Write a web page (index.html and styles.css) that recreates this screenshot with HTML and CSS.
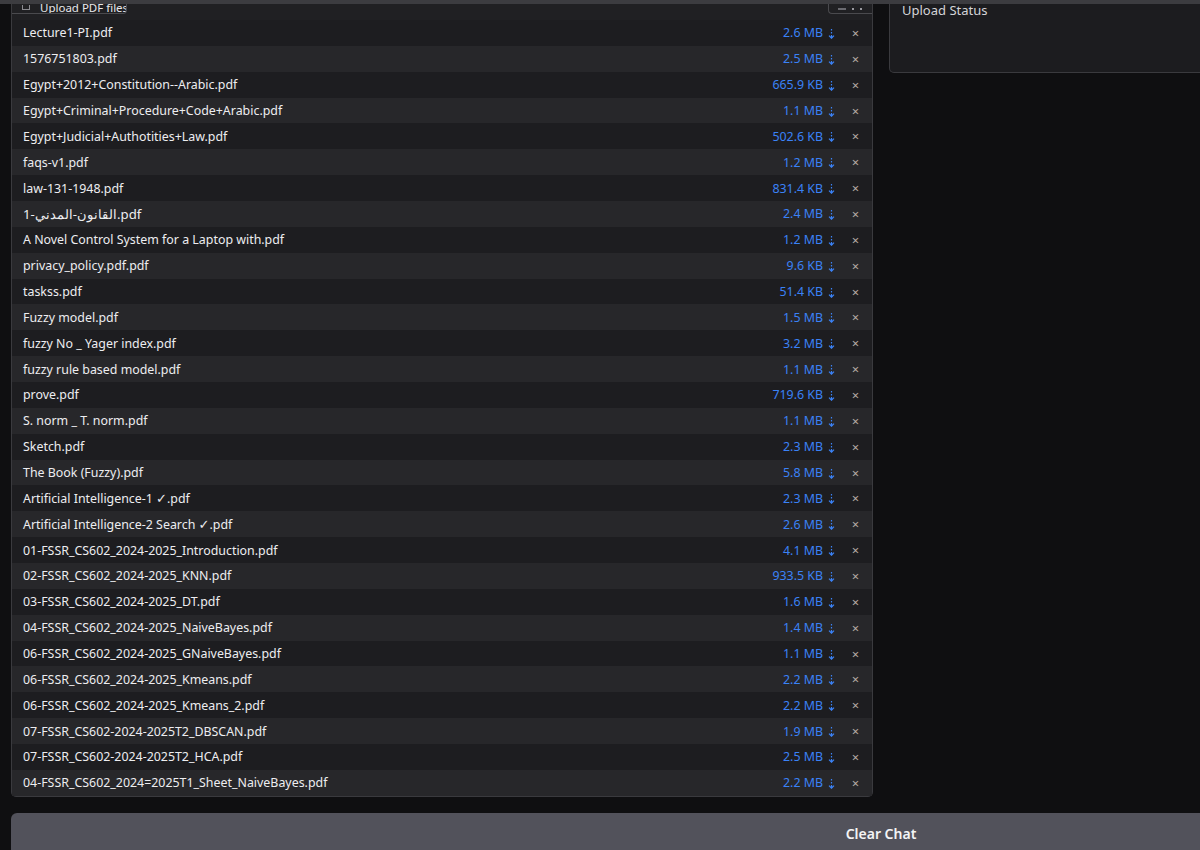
FILE: index.html
```html
<!DOCTYPE html>
<html>
<head>
<meta charset="utf-8">
<link rel="stylesheet" href="styles.css">
</head>
<body>
<div class="topbar"></div>
<div class="main">
  <div class="cols">
    <div class="panel files">
      <div class="files-head">
        <div class="label-tab"><span class="lt-icon"></span><span class="lt-text">Upload PDF files</span></div>
        <div class="icon-tab"><span class="it-a"></span><span class="it-b"></span><span class="it-c"></span></div>
      </div>
      <div class="list">
        <div class="row"><span class="name">Lecture1-PI.pdf</span><span class="size">2.6 MB<svg class="arr" viewBox="0 0 7 10"><path d="M3.5 0v1.6M3.5 3v1.6M3.5 6v3.2M1 6.6l2.5 2.6 2.5-2.6"/></svg></span><span class="rm">×</span></div>
        <div class="row"><span class="name">1576751803.pdf</span><span class="size">2.5 MB<svg class="arr" viewBox="0 0 7 10"><path d="M3.5 0v1.6M3.5 3v1.6M3.5 6v3.2M1 6.6l2.5 2.6 2.5-2.6"/></svg></span><span class="rm">×</span></div>
        <div class="row"><span class="name">Egypt+2012+Constitution--Arabic.pdf</span><span class="size">665.9 KB<svg class="arr" viewBox="0 0 7 10"><path d="M3.5 0v1.6M3.5 3v1.6M3.5 6v3.2M1 6.6l2.5 2.6 2.5-2.6"/></svg></span><span class="rm">×</span></div>
        <div class="row"><span class="name">Egypt+Criminal+Procedure+Code+Arabic.pdf</span><span class="size">1.1 MB<svg class="arr" viewBox="0 0 7 10"><path d="M3.5 0v1.6M3.5 3v1.6M3.5 6v3.2M1 6.6l2.5 2.6 2.5-2.6"/></svg></span><span class="rm">×</span></div>
        <div class="row"><span class="name">Egypt+Judicial+Authotities+Law.pdf</span><span class="size">502.6 KB<svg class="arr" viewBox="0 0 7 10"><path d="M3.5 0v1.6M3.5 3v1.6M3.5 6v3.2M1 6.6l2.5 2.6 2.5-2.6"/></svg></span><span class="rm">×</span></div>
        <div class="row"><span class="name">faqs-v1.pdf</span><span class="size">1.2 MB<svg class="arr" viewBox="0 0 7 10"><path d="M3.5 0v1.6M3.5 3v1.6M3.5 6v3.2M1 6.6l2.5 2.6 2.5-2.6"/></svg></span><span class="rm">×</span></div>
        <div class="row"><span class="name">law-131-1948.pdf</span><span class="size">831.4 KB<svg class="arr" viewBox="0 0 7 10"><path d="M3.5 0v1.6M3.5 3v1.6M3.5 6v3.2M1 6.6l2.5 2.6 2.5-2.6"/></svg></span><span class="rm">×</span></div>
        <div class="row"><span class="name ar">القانون-المدني-1.pdf</span><span class="size">2.4 MB<svg class="arr" viewBox="0 0 7 10"><path d="M3.5 0v1.6M3.5 3v1.6M3.5 6v3.2M1 6.6l2.5 2.6 2.5-2.6"/></svg></span><span class="rm">×</span></div>
        <div class="row"><span class="name">A Novel Control System for a Laptop with.pdf</span><span class="size">1.2 MB<svg class="arr" viewBox="0 0 7 10"><path d="M3.5 0v1.6M3.5 3v1.6M3.5 6v3.2M1 6.6l2.5 2.6 2.5-2.6"/></svg></span><span class="rm">×</span></div>
        <div class="row"><span class="name">privacy_policy.pdf.pdf</span><span class="size">9.6 KB<svg class="arr" viewBox="0 0 7 10"><path d="M3.5 0v1.6M3.5 3v1.6M3.5 6v3.2M1 6.6l2.5 2.6 2.5-2.6"/></svg></span><span class="rm">×</span></div>
        <div class="row"><span class="name">taskss.pdf</span><span class="size">51.4 KB<svg class="arr" viewBox="0 0 7 10"><path d="M3.5 0v1.6M3.5 3v1.6M3.5 6v3.2M1 6.6l2.5 2.6 2.5-2.6"/></svg></span><span class="rm">×</span></div>
        <div class="row"><span class="name">Fuzzy model.pdf</span><span class="size">1.5 MB<svg class="arr" viewBox="0 0 7 10"><path d="M3.5 0v1.6M3.5 3v1.6M3.5 6v3.2M1 6.6l2.5 2.6 2.5-2.6"/></svg></span><span class="rm">×</span></div>
        <div class="row"><span class="name">fuzzy No _ Yager index.pdf</span><span class="size">3.2 MB<svg class="arr" viewBox="0 0 7 10"><path d="M3.5 0v1.6M3.5 3v1.6M3.5 6v3.2M1 6.6l2.5 2.6 2.5-2.6"/></svg></span><span class="rm">×</span></div>
        <div class="row"><span class="name">fuzzy rule based model.pdf</span><span class="size">1.1 MB<svg class="arr" viewBox="0 0 7 10"><path d="M3.5 0v1.6M3.5 3v1.6M3.5 6v3.2M1 6.6l2.5 2.6 2.5-2.6"/></svg></span><span class="rm">×</span></div>
        <div class="row"><span class="name">prove.pdf</span><span class="size">719.6 KB<svg class="arr" viewBox="0 0 7 10"><path d="M3.5 0v1.6M3.5 3v1.6M3.5 6v3.2M1 6.6l2.5 2.6 2.5-2.6"/></svg></span><span class="rm">×</span></div>
        <div class="row"><span class="name">S. norm _ T. norm.pdf</span><span class="size">1.1 MB<svg class="arr" viewBox="0 0 7 10"><path d="M3.5 0v1.6M3.5 3v1.6M3.5 6v3.2M1 6.6l2.5 2.6 2.5-2.6"/></svg></span><span class="rm">×</span></div>
        <div class="row"><span class="name">Sketch.pdf</span><span class="size">2.3 MB<svg class="arr" viewBox="0 0 7 10"><path d="M3.5 0v1.6M3.5 3v1.6M3.5 6v3.2M1 6.6l2.5 2.6 2.5-2.6"/></svg></span><span class="rm">×</span></div>
        <div class="row"><span class="name">The Book (Fuzzy).pdf</span><span class="size">5.8 MB<svg class="arr" viewBox="0 0 7 10"><path d="M3.5 0v1.6M3.5 3v1.6M3.5 6v3.2M1 6.6l2.5 2.6 2.5-2.6"/></svg></span><span class="rm">×</span></div>
        <div class="row"><span class="name">Artificial Intelligence-1 <span class="chk">✓</span>.pdf</span><span class="size">2.3 MB<svg class="arr" viewBox="0 0 7 10"><path d="M3.5 0v1.6M3.5 3v1.6M3.5 6v3.2M1 6.6l2.5 2.6 2.5-2.6"/></svg></span><span class="rm">×</span></div>
        <div class="row"><span class="name">Artificial Intelligence-2 Search <span class="chk">✓</span>.pdf</span><span class="size">2.6 MB<svg class="arr" viewBox="0 0 7 10"><path d="M3.5 0v1.6M3.5 3v1.6M3.5 6v3.2M1 6.6l2.5 2.6 2.5-2.6"/></svg></span><span class="rm">×</span></div>
        <div class="row"><span class="name">01-FSSR_CS602_2024-2025_Introduction.pdf</span><span class="size">4.1 MB<svg class="arr" viewBox="0 0 7 10"><path d="M3.5 0v1.6M3.5 3v1.6M3.5 6v3.2M1 6.6l2.5 2.6 2.5-2.6"/></svg></span><span class="rm">×</span></div>
        <div class="row"><span class="name">02-FSSR_CS602_2024-2025_KNN.pdf</span><span class="size">933.5 KB<svg class="arr" viewBox="0 0 7 10"><path d="M3.5 0v1.6M3.5 3v1.6M3.5 6v3.2M1 6.6l2.5 2.6 2.5-2.6"/></svg></span><span class="rm">×</span></div>
        <div class="row"><span class="name">03-FSSR_CS602_2024-2025_DT.pdf</span><span class="size">1.6 MB<svg class="arr" viewBox="0 0 7 10"><path d="M3.5 0v1.6M3.5 3v1.6M3.5 6v3.2M1 6.6l2.5 2.6 2.5-2.6"/></svg></span><span class="rm">×</span></div>
        <div class="row"><span class="name">04-FSSR_CS602_2024-2025_NaiveBayes.pdf</span><span class="size">1.4 MB<svg class="arr" viewBox="0 0 7 10"><path d="M3.5 0v1.6M3.5 3v1.6M3.5 6v3.2M1 6.6l2.5 2.6 2.5-2.6"/></svg></span><span class="rm">×</span></div>
        <div class="row"><span class="name">06-FSSR_CS602_2024-2025_GNaiveBayes.pdf</span><span class="size">1.1 MB<svg class="arr" viewBox="0 0 7 10"><path d="M3.5 0v1.6M3.5 3v1.6M3.5 6v3.2M1 6.6l2.5 2.6 2.5-2.6"/></svg></span><span class="rm">×</span></div>
        <div class="row"><span class="name">06-FSSR_CS602_2024-2025_Kmeans.pdf</span><span class="size">2.2 MB<svg class="arr" viewBox="0 0 7 10"><path d="M3.5 0v1.6M3.5 3v1.6M3.5 6v3.2M1 6.6l2.5 2.6 2.5-2.6"/></svg></span><span class="rm">×</span></div>
        <div class="row"><span class="name">06-FSSR_CS602_2024-2025_Kmeans_2.pdf</span><span class="size">2.2 MB<svg class="arr" viewBox="0 0 7 10"><path d="M3.5 0v1.6M3.5 3v1.6M3.5 6v3.2M1 6.6l2.5 2.6 2.5-2.6"/></svg></span><span class="rm">×</span></div>
        <div class="row"><span class="name">07-FSSR_CS602-2024-2025T2_DBSCAN.pdf</span><span class="size">1.9 MB<svg class="arr" viewBox="0 0 7 10"><path d="M3.5 0v1.6M3.5 3v1.6M3.5 6v3.2M1 6.6l2.5 2.6 2.5-2.6"/></svg></span><span class="rm">×</span></div>
        <div class="row"><span class="name">07-FSSR_CS602-2024-2025T2_HCA.pdf</span><span class="size">2.5 MB<svg class="arr" viewBox="0 0 7 10"><path d="M3.5 0v1.6M3.5 3v1.6M3.5 6v3.2M1 6.6l2.5 2.6 2.5-2.6"/></svg></span><span class="rm">×</span></div>
        <div class="row"><span class="name">04-FSSR_CS602_2024=2025T1_Sheet_NaiveBayes.pdf</span><span class="size">2.2 MB<svg class="arr" viewBox="0 0 7 10"><path d="M3.5 0v1.6M3.5 3v1.6M3.5 6v3.2M1 6.6l2.5 2.6 2.5-2.6"/></svg></span><span class="rm">×</span></div>
      </div>
    </div>
    <div class="panel status">
      <div class="status-label">Upload Status</div>
    </div>
  </div>
  <button class="clear">Clear Chat</button>
</div>
</body>
</html>
```

FILE: styles.css
```css
html, body {
  margin: 0;
  padding: 0;
}
body {
  width: 1200px;
  height: 850px;
  overflow: hidden;
  background: #0f0f11;
  font-family: "Noto Sans", "Open Sans", sans-serif;
  color: #e7e7ea;
}
.topbar {
  height: 4px;
  background: #3c3c40;
}
.main {
  padding: 0 11px;
  width: 1740px;
  display: flex;
  flex-direction: column;
  gap: 16px;
}
.cols {
  display: flex;
  gap: 16px;
  align-items: flex-start;
}
.panel {
  width: 862px;
  box-sizing: border-box;
  border: 1px solid #3a3a3e;
  border-top: none;
  border-radius: 0 0 5px 5px;
}
.files {
  background: #202023;
}
.files-head {
  height: 16px;
  display: flex;
  justify-content: space-between;
  align-items: flex-start;
}
.label-tab {
  width: 115px;
  height: 10px;
  box-sizing: border-box;
  border-right: 1px solid #4a4a4e;
  border-bottom: 1px solid #4a4a4e;
  border-radius: 0 0 4px 0;
  overflow: hidden;
  display: flex;
  align-items: flex-end;
  gap: 10px;
  padding-left: 10px;
  white-space: nowrap;
  background: #202023;
}
.lt-icon {
  flex: none;
  width: 6px;
  height: 4px;
  margin-bottom: 3px;
  border: 1px solid #8a8a90;
  border-top: none;
}
.lt-text {
  font-size: 11.5px;
  line-height: 12px;
  margin-bottom: -1px;
  color: #e7e7ea;
}
.icon-tab {
  width: 44px;
  height: 10px;
  box-sizing: border-box;
  border-left: 1px solid #4a4a4e;
  border-bottom: 1px solid #4a4a4e;
  border-radius: 0 0 0 4px;
  display: flex;
  align-items: flex-end;
  gap: 6px;
  padding: 0 0 3px 9px;
}
.it-a {
  width: 8px;
  height: 2px;
  background: #6a6a70;
}
.it-b, .it-c {
  width: 2px;
  height: 2px;
  background: #9a9aa0;
}
.list {
  display: flex;
  flex-direction: column;
}
.row {
  height: 25.86px;
  display: flex;
  align-items: center;
  padding-left: 11px;
  font-size: 12.4px;
  background: #1d1d20;
}
.row:nth-child(even) {
  background: #27272a;
}
.name {
  flex: 1;
  white-space: nowrap;
  color: #ededf0;
}
.name.ar {
  font-size: 13.2px;
}
.chk {
  font-family: "DejaVu Sans", sans-serif;
  font-size: 13px;
  font-weight: bold;
}
.size {
  color: #3b82f6;
  white-space: nowrap;
  display: flex;
  align-items: center;
  gap: 5px;
  margin-right: 1px;
}
.arr {
  width: 7px;
  height: 10px;
  fill: none;
  stroke: #3b82f6;
  stroke-width: 1.2;
  margin-top: 2px;
}
.rm {
  width: 36px;
  text-align: center;
  text-indent: 3px;
  color: #b4aba3;
  font-size: 13px;
}
.status {
  height: 69px;
  background: #1c1c1f;
  padding: 0 12px;
}
.status-label {
  font-size: 13px;
  line-height: 12px;
  color: #d4d4d8;
}
.clear {
  width: 1740px;
  height: 42px;
  border: none;
  border-radius: 6px;
  background: #52525b;
  color: #f4f4f5;
  font-family: "Noto Sans", "Open Sans", sans-serif;
  font-size: 14px;
  font-weight: 600;
  padding: 0;
  margin: 0;
}
```
